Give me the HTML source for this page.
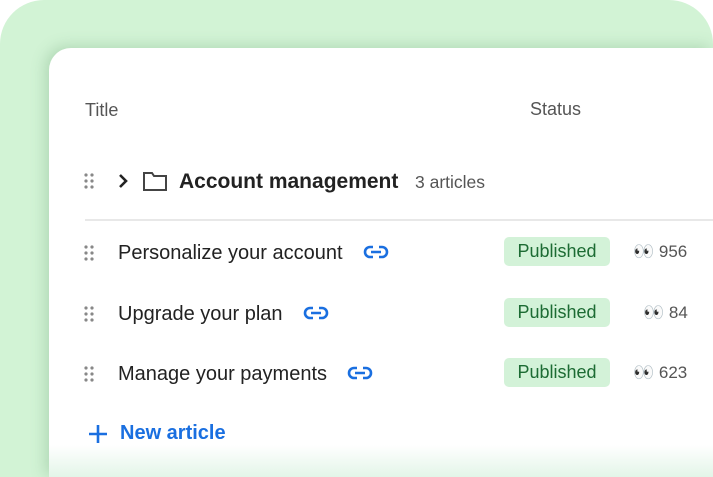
<!DOCTYPE html>
<html><head><style>
html,body{margin:0;width:713px;height:477px;overflow:hidden;background:#fff;font-family:"Liberation Sans",sans-serif;position:relative;}
.bg{position:absolute;left:0;top:0;width:713px;height:477px;background:#d2f3d5;border-radius:44px 44px 0 0;}
.card{position:absolute;left:49px;top:48px;width:664px;height:429px;background:#fff;border-radius:22px 0 0 0;box-shadow:-4px -2px 14px rgba(80,140,90,.25);}
.fade{position:absolute;left:49px;top:445px;width:664px;height:32px;background:linear-gradient(#fff,#e3f5e8);}
.t{position:absolute;white-space:nowrap;}
.h{color:#555;font-size:18px;}
.row{color:#222;font-size:20px;}
.dots{position:absolute;width:10px;height:16px;}
.pub{position:absolute;left:504px;width:106px;height:29px;background:#d3f2d8;border-radius:5px;color:#1c6b33;font-size:18px;line-height:29px;text-align:center;}
.v{position:absolute;color:#555;font-size:17px;}
</style></head><body>
<div class="bg"></div>
<div class="card"></div>
<div class="t h" style="left:85px;top:100px">Title</div>
<div class="t h" style="left:530px;top:99px">Status</div>

<svg class="dots" style="left:84px;top:173px" viewBox="0 0 10 16"><g fill="#888"><circle cx="2" cy="2" r="1.6"/><circle cx="8" cy="2" r="1.6"/><circle cx="2" cy="8" r="1.6"/><circle cx="8" cy="8" r="1.6"/><circle cx="2" cy="14" r="1.6"/><circle cx="8" cy="14" r="1.6"/></g></svg>
<svg style="position:absolute;left:117px;top:173px" width="12" height="16" viewBox="0 0 12 16"><path d="M3 2l6 6-6 6" fill="none" stroke="#222" stroke-width="2.6"/></svg>
<svg style="position:absolute;left:142px;top:171px" width="26" height="21" viewBox="0 0 26 21"><path d="M2 2h8l2 3h12v14H2z" fill="none" stroke="#444" stroke-width="2"/></svg>
<div class="t" style="left:179px;top:170px;font-size:21px;font-weight:bold;color:#222">Account management</div>
<div class="t" style="left:415px;top:172px;font-size:17.5px;color:#555">3 articles</div>
<div style="position:absolute;left:85px;top:219px;width:628px;height:2px;background:#e8e8e8"></div>

<svg class="dots" style="left:84px;top:245px" viewBox="0 0 10 16"><g fill="#888"><circle cx="2" cy="2" r="1.6"/><circle cx="8" cy="2" r="1.6"/><circle cx="2" cy="8" r="1.6"/><circle cx="8" cy="8" r="1.6"/><circle cx="2" cy="14" r="1.6"/><circle cx="8" cy="14" r="1.6"/></g></svg>
<div class="t row" style="left:118px;top:242px">Personalize your account</div>
<svg style="position:absolute;left:363px;top:245px" width="26" height="14" viewBox="0 0 26 14"><g fill="none" stroke="#1a6fe0" stroke-width="2.6"><path d="M10 2H7a5 5 0 0 0 0 10h3M16 2h3a5 5 0 0 1 0 10h-3M8 7h10"/></g></svg>
<div class="pub" style="top:237px">Published</div>
<div class="t v" style="left:633px;top:242px">👀 956</div>

<svg class="dots" style="left:84px;top:306px" viewBox="0 0 10 16"><g fill="#888"><circle cx="2" cy="2" r="1.6"/><circle cx="8" cy="2" r="1.6"/><circle cx="2" cy="8" r="1.6"/><circle cx="8" cy="8" r="1.6"/><circle cx="2" cy="14" r="1.6"/><circle cx="8" cy="14" r="1.6"/></g></svg>
<div class="t row" style="left:118px;top:303px">Upgrade your plan</div>
<svg style="position:absolute;left:303px;top:306px" width="26" height="14" viewBox="0 0 26 14"><g fill="none" stroke="#1a6fe0" stroke-width="2.6"><path d="M10 2H7a5 5 0 0 0 0 10h3M16 2h3a5 5 0 0 1 0 10h-3M8 7h10"/></g></svg>
<div class="pub" style="top:298px">Published</div>
<div class="t v" style="left:643px;top:303px">👀 84</div>

<svg class="dots" style="left:84px;top:366px" viewBox="0 0 10 16"><g fill="#888"><circle cx="2" cy="2" r="1.6"/><circle cx="8" cy="2" r="1.6"/><circle cx="2" cy="8" r="1.6"/><circle cx="8" cy="8" r="1.6"/><circle cx="2" cy="14" r="1.6"/><circle cx="8" cy="14" r="1.6"/></g></svg>
<div class="t row" style="left:118px;top:363px">Manage your payments</div>
<svg style="position:absolute;left:347px;top:366px" width="26" height="14" viewBox="0 0 26 14"><g fill="none" stroke="#1a6fe0" stroke-width="2.6"><path d="M10 2H7a5 5 0 0 0 0 10h3M16 2h3a5 5 0 0 1 0 10h-3M8 7h10"/></g></svg>
<div class="pub" style="top:358px">Published</div>
<div class="t v" style="left:633px;top:363px">👀 623</div>

<div class="fade"></div>
<svg style="position:absolute;left:88px;top:424px" width="20" height="20" viewBox="0 0 20 20"><path d="M10 1v18M1 10h18" stroke="#1a6fe0" stroke-width="2.6"/></svg>
<div class="t" style="left:120px;top:422px;font-size:20px;font-weight:bold;color:#1a6fe0">New article</div>
</body></html>
